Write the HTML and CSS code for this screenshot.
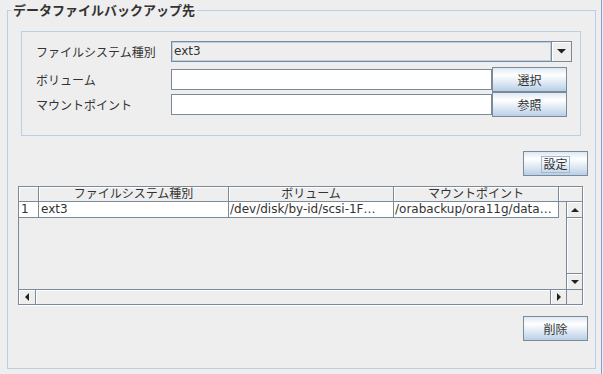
FILE: index.html
```html
<!DOCTYPE html>
<html lang="ja">
<head>
    <meta charset="UTF-8">
    <title>データファイルバックアップ先</title>
    <link rel="stylesheet" href="styles.css">
</head>
<body>
    <div class="frame">
        <div class="group">
            <div class="group-title">データファイルバックアップ先</div>
            <div class="form-panel">
                <div class="form-row form-row-first">
                    <label class="form-label">ファイルシステム種別</label>
                    <div class="combo">
                        <span class="combo-value">ext3</span>
                        <span class="combo-arrow">
                            <svg width="9" height="5" viewBox="0 0 9 5"><polygon points="0,0 9,0 4.5,4.5" fill="#222"/></svg>
                        </span>
                    </div>
                </div>
                <div class="form-row">
                    <label class="form-label">ボリューム</label>
                    <input type="text" class="text-field">
                    <button class="btn btn-side">選択</button>
                </div>
                <div class="form-row">
                    <label class="form-label">マウントポイント</label>
                    <input type="text" class="text-field">
                    <button class="btn btn-side">参照</button>
                </div>
            </div>

            <div class="actions">
                <button class="btn btn-action"><span class="focus-ring">設定</span></button>
            </div>

            <div class="table-pane">
                <div class="table-header">
                    <div class="th col-no"></div>
                    <div class="th col-type">ファイルシステム種別</div>
                    <div class="th col-vol">ボリューム</div>
                    <div class="th col-mount">マウントポイント</div>
                    <div class="th th-corner"></div>
                </div>
                <div class="table-body">
                    <div class="viewport">
                        <div class="tr">
                            <div class="td col-no">1</div>
                            <div class="td col-type">ext3</div>
                            <div class="td col-vol">/dev/disk/by-id/scsi-1F…</div>
                            <div class="td col-mount">/orabackup/ora11g/data…</div>
                        </div>
                    </div>
                    <div class="vscroll">
                        <div class="scroll-btn scroll-up">
                            <svg width="8" height="4" viewBox="0 0 8 4"><polygon points="0,4 4,0 8,4" fill="#222"/></svg>
                        </div>
                        <div class="scroll-track"></div>
                        <div class="scroll-btn scroll-down">
                            <svg width="8" height="4" viewBox="0 0 8 4"><polygon points="0,0 8,0 4,4" fill="#222"/></svg>
                        </div>
                    </div>
                </div>
                <div class="hscroll-row">
                    <div class="hscroll">
                        <div class="hbtn hbtn-left">
                            <svg width="4" height="8" viewBox="0 0 4 8"><polygon points="4,0 0,4 4,8" fill="#222"/></svg>
                        </div>
                        <div class="scroll-track"></div>
                        <div class="hbtn hbtn-right">
                            <svg width="4" height="8" viewBox="0 0 4 8"><polygon points="0,0 4,4 0,8" fill="#222"/></svg>
                        </div>
                    </div>
                    <div class="scroll-corner"></div>
                </div>
            </div>

            <div class="actions">
                <button class="btn btn-action btn-delete">削除</button>
            </div>
        </div>
    </div>
</body>
</html>
```

FILE: styles.css
```css
body {
    margin: 0;
    background: #eeeeee;
    font-family: "DejaVu Sans", "Noto Sans CJK JP", sans-serif;
    font-size: 12px;
    color: #333;
}
.frame {
    width: 602px;
    height: 374px;
    box-sizing: border-box;
    border-right: 1px solid #7f9dd3;
    padding: 10px 0 0 7px;
}
.group {
    width: 589px;
    height: 359px;
    box-sizing: border-box;
    border: 1px solid #b8cfe5;
    display: flex;
    flex-direction: column;
}
.group-title {
    align-self: flex-start;
    margin: -8px 0 0 3px;
    padding: 0 2px;
    height: 16px;
    line-height: 16px;
    font-size: 13px;
    font-weight: bold;
    background: #eeeeee;
}
.form-panel {
    margin: 12px 0 0 13px;
    width: 560px;
    height: 105px;
    box-sizing: border-box;
    border: 1px solid #b8cfe5;
    padding: 7px 0 0 14px;
    display: flex;
    flex-direction: column;
}
.form-row {
    display: flex;
    align-items: center;
    height: 25px;
}
.form-row-first {
    margin-bottom: 3px;
}
.form-label {
    width: 135px;
    flex-shrink: 0;
}
.combo {
    display: flex;
    height: 21px;
}
.combo-value {
    width: 381px;
    box-sizing: border-box;
    border: 1px solid #7a8a99;
    box-shadow: inset 1px 1px 0 #b8cfe5, inset -1px -1px 0 #b8cfe5;
    background: #eeeeee;
    padding-left: 2px;
    line-height: 19px;
}
.combo-arrow {
    width: 20px;
    box-sizing: border-box;
    border: 1px solid #7a8a99;
    border-left: none;
    background: #eeeeee;
    box-shadow: inset 1px 1px 0 #fff;
    display: flex;
    align-items: center;
    justify-content: center;
}
.text-field {
    width: 321px;
    height: 21px;
    box-sizing: border-box;
    border: 1px solid #7a8a99;
    background: #fff;
    margin: 0;
    padding: 0;
}
.btn {
    box-sizing: border-box;
    border: 1px solid #7a8a99;
    background: linear-gradient(#dde8f3 0%, #ffffff 30%, #dde8f3 65%, #b8cfe5 100%);
    font: inherit;
    color: #333;
    margin: 0;
    padding: 0;
    height: 25px;
}
.btn-side {
    width: 75px;
}
.actions {
    display: flex;
    justify-content: flex-end;
    padding-right: 7px;
}
.btn-action {
    width: 65px;
    margin-top: 15px;
}
.btn-delete {
    margin-top: 11px;
}
.focus-ring {
    border: 1px solid #a3b8cc;
    padding: 1px 1px 0;
}
.table-pane {
    margin: 10px 0 0 10px;
    width: 565px;
    height: 119px;
    box-sizing: border-box;
    border: 1px solid #7a8a99;
    box-shadow: 1px 1px 0 #fff;
    display: flex;
    flex-direction: column;
}
.table-header {
    display: flex;
    height: 15px;
    flex-shrink: 0;
}
.th {
    box-sizing: border-box;
    border-right: 1px solid #7a8a99;
    border-bottom: 1px solid #7a8a99;
    background: #eeeeee;
    box-shadow: inset 1px 1px 0 #fff;
    text-align: center;
    line-height: 14px;
    white-space: nowrap;
}
.th-corner {
    flex: 1;
    border-right: none;
}
.col-no { width: 20px; }
.col-type { width: 190px; }
.col-vol { width: 165px; }
.col-mount { width: 165px; }
.table-body {
    display: flex;
    height: 87px;
}
.viewport {
    flex: 1;
    background: #eeeeee;
}
.tr {
    display: flex;
    height: 16px;
}
.td {
    box-sizing: border-box;
    background: #fff;
    border-right: 1px solid #7a8a99;
    border-bottom: 1px solid #7a8a99;
    padding-left: 2px;
    line-height: 15px;
    white-space: nowrap;
    overflow: hidden;
}
.td.col-vol,
.td.col-mount {
    padding-left: 1px;
}
.vscroll {
    width: 16px;
    box-sizing: border-box;
    border-left: 1px solid #7a8a99;
    display: flex;
    flex-direction: column;
}
.scroll-btn {
    height: 16px;
    box-sizing: border-box;
    background: #eeeeee;
    box-shadow: inset 1px 1px 0 #fff;
    display: flex;
    align-items: center;
    justify-content: center;
    flex-shrink: 0;
}
.scroll-up {
    border-bottom: 1px solid #7a8a99;
}
.scroll-down {
    border-top: 1px solid #7a8a99;
}
.scroll-track {
    flex: 1;
    background: #eeeeee;
    box-shadow: inset 1px 1px 0 #fff;
}
.hscroll-row {
    display: flex;
    height: 15px;
    box-sizing: border-box;
    border-top: 1px solid #7a8a99;
}
.hscroll {
    flex: 1;
    display: flex;
}
.hbtn {
    width: 17px;
    box-sizing: border-box;
    background: #eeeeee;
    box-shadow: inset 1px 1px 0 #fff;
    display: flex;
    align-items: center;
    justify-content: center;
}
.hbtn-left {
    border-right: 1px solid #7a8a99;
}
.hbtn-right {
    width: 16px;
    border-left: 1px solid #7a8a99;
}
.scroll-corner {
    width: 16px;
    box-sizing: border-box;
    border-left: 1px solid #7a8a99;
    background: #eeeeee;
}
```
